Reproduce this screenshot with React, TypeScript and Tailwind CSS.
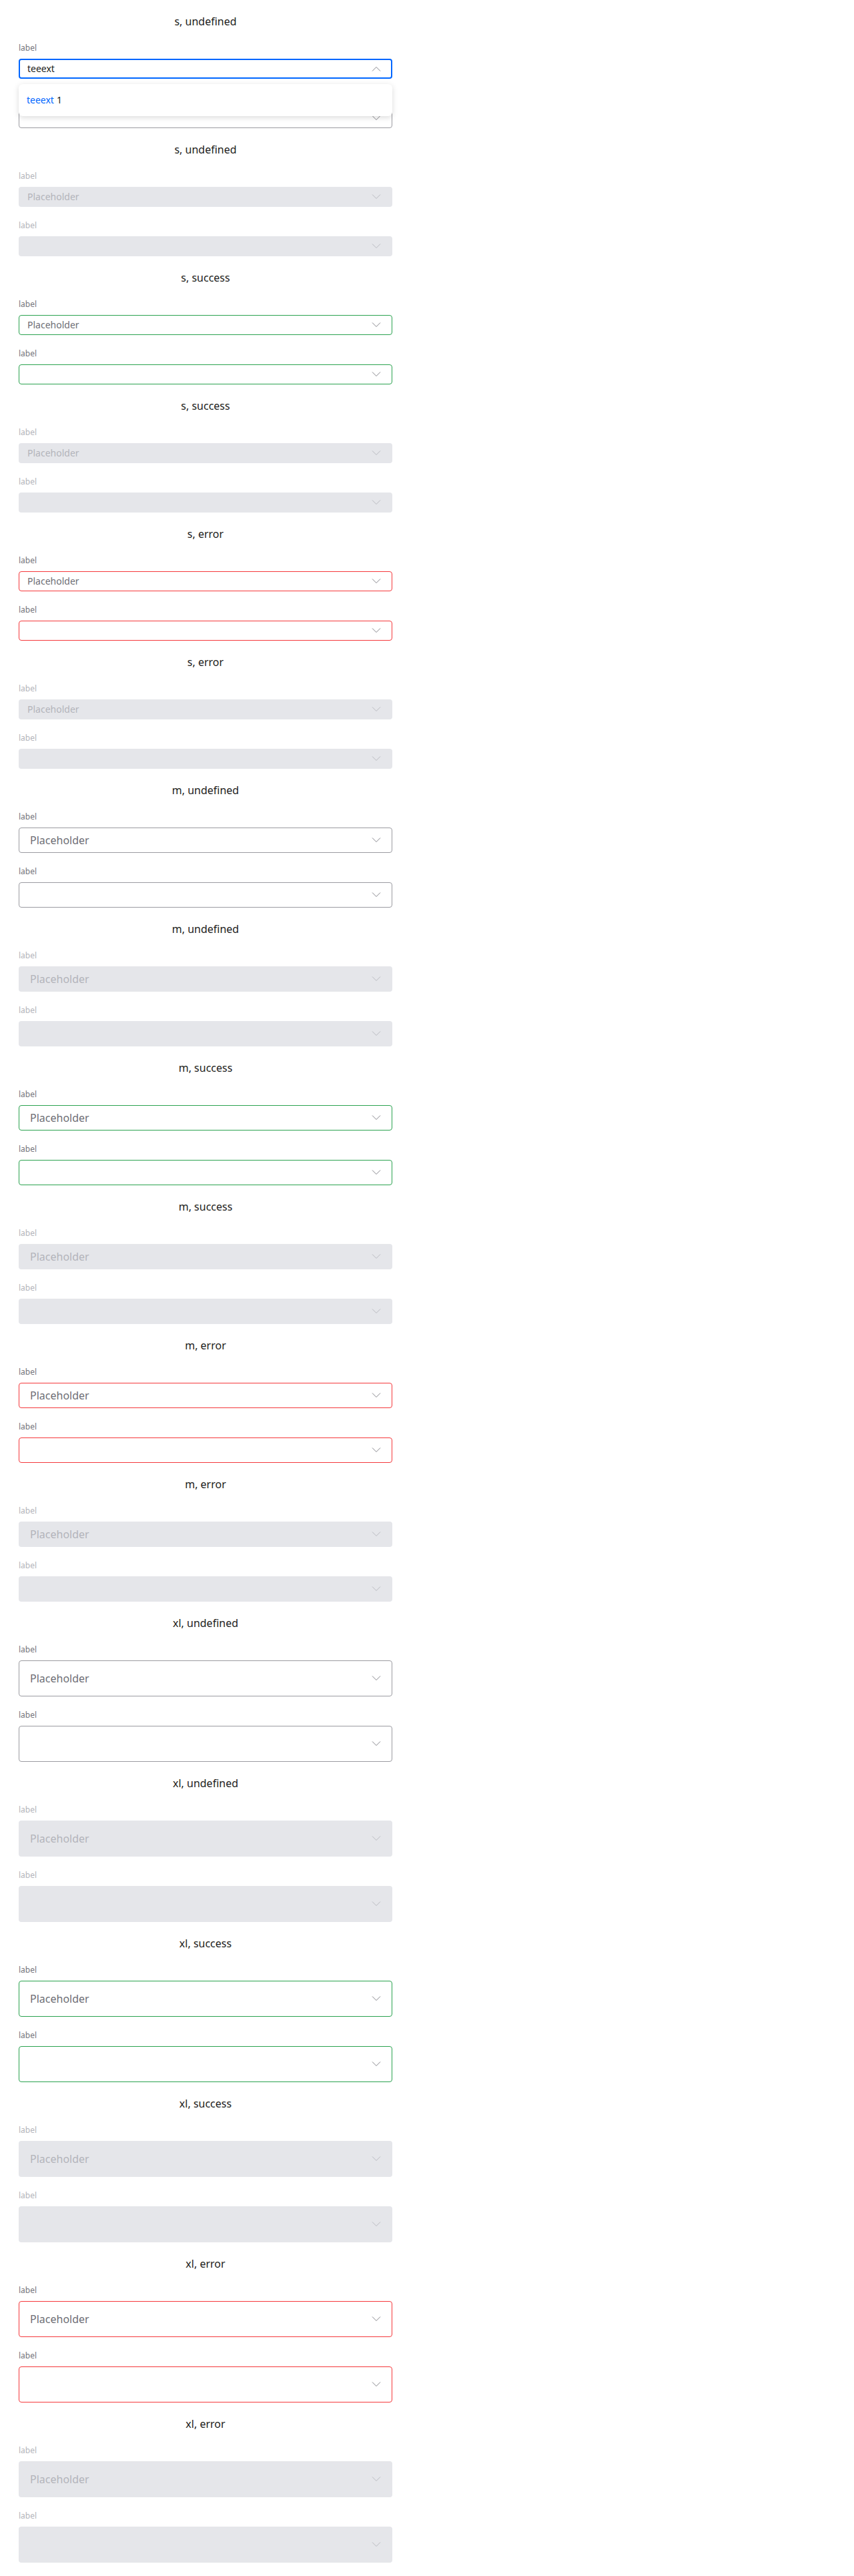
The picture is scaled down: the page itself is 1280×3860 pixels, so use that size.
import { Fragment } from 'react';

type Size = 's' | 'm' | 'xl';
type Status = 'undefined' | 'success' | 'error';

const sizes: Size[] = ['s', 'm', 'xl'];
const statuses: Status[] = ['undefined', 'success', 'error'];

const heightBySize: Record<Size, string> = {
  s: 'h-[30px] pl-3 text-sm',
  m: 'h-[38px] pl-4 text-base',
  xl: 'h-[54px] pl-4 text-base',
};

const borderByStatus: Record<Status, string> = {
  undefined: 'border border-[#9b9ba1]',
  success: 'border border-[#2aa24f]',
  error: 'border border-[#f5383b]',
};

const Chevron = ({ up, disabled }: { up?: boolean; disabled?: boolean }) => (
  <svg
    width="14"
    height="8"
    viewBox="0 0 14 8"
    fill="none"
    className={disabled ? 'text-[#b9bac0]' : 'text-[#85858b]'}
  >
    <path
      d={up ? 'M1 7.5L7 1.5L13 7.5' : 'M1 0.5L7 6.5L13 0.5'}
      stroke="currentColor"
      strokeWidth="1"
    />
  </svg>
);

type FieldProps = {
  size: Size;
  status: Status;
  disabled?: boolean;
  placeholder?: boolean;
  open?: boolean;
};

const Field = ({ size, status, disabled, placeholder, open }: FieldProps) => {
  let box = borderByStatus[status];
  if (disabled) box = 'border border-transparent bg-[#e5e6ea]';
  if (open) box = 'border-2 border-[#0066ff]';

  return (
    <div className="relative flex flex-col gap-2">
      <span
        className={`text-xs leading-4 ${disabled ? 'text-[#b3b4ba]' : 'text-[#74747b]'}`}
      >
        label
      </span>
      <div
        className={`flex items-center justify-between rounded pr-4 ${heightBySize[size]} ${box} ${open ? 'pl-[11px] pr-[15px]' : ''}`}
      >
        {open ? (
          <span className="text-[#1d1d20]">teeext</span>
        ) : placeholder ? (
          <span className={disabled ? 'text-[#b3b4ba]' : 'text-[#6e6e75]'}>
            Placeholder
          </span>
        ) : (
          <span />
        )}
        <Chevron up={open} disabled={disabled} />
      </div>
      {open && (
        <div className="absolute left-0 right-0 top-[62px] z-10 flex h-[48px] items-center rounded-md bg-white px-3 text-sm shadow-[0_2px_8px_rgba(0,0,0,0.15)]">
          <span className="text-[#0066ff]">teeext</span>
          <span className="ml-1 text-[#1d1d20]">1</span>
        </div>
      )}
    </div>
  );
};

const Section = ({
  size,
  status,
  disabled,
  first,
}: {
  size: Size;
  status: Status;
  disabled?: boolean;
  first?: boolean;
}) => (
  <div className="flex flex-col gap-5">
    <h2 className="text-center text-base leading-6 text-[#1d1d20]">
      {size}, {status}
    </h2>
    <Field size={size} status={status} disabled={disabled} placeholder={!first} open={first} />
    <Field size={size} status={status} disabled={disabled} />
  </div>
);

export default function App() {
  return (
    <div
      className="min-h-screen bg-white pl-7 pt-5 pb-5"
      style={{ fontFamily: '"Noto Sans", "Open Sans", sans-serif' }}
    >
      <div className="flex w-[560px] flex-col gap-5">
        {sizes.map((size) =>
          statuses.map((status, i) => (
            <Fragment key={size + status}>
              <Section size={size} status={status} first={size === 's' && i === 0} />
              <Section size={size} status={status} disabled />
            </Fragment>
          )),
        )}
      </div>
    </div>
  );
}
